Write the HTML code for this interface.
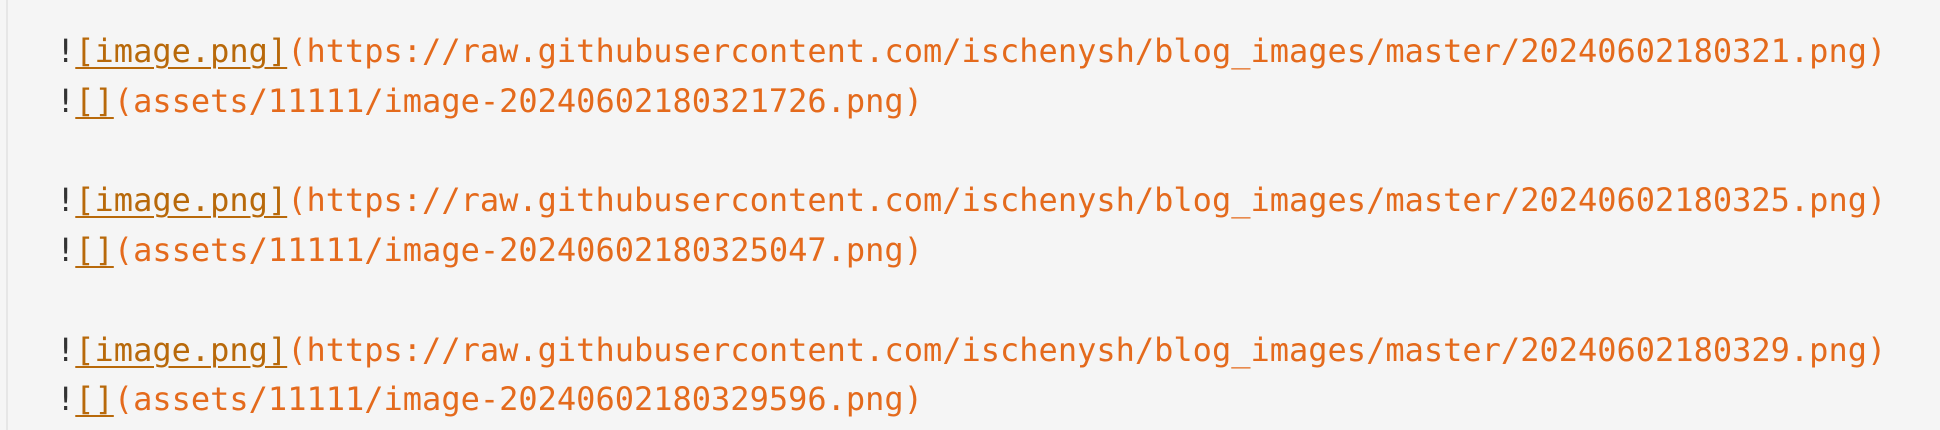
<!DOCTYPE html>
<html><head><meta charset="utf-8"><style>
html,body{margin:0;padding:0;width:1940px;height:430px;overflow:hidden;background:#f5f5f5;}
.bar{position:absolute;left:6px;top:0;width:2px;height:430px;background:#e6e6e6;}
pre{position:absolute;left:56px;top:27px;margin:0;font-family:"DejaVu Sans Mono","Liberation Mono",monospace;font-size:32px;line-height:49.75px;color:#e46a1c;}
.b{color:#333;}
.l{color:#b8690a;text-decoration:underline;text-decoration-thickness:2px;text-underline-offset:5px;}
</style></head><body><div class="bar"></div>
<pre><span class="b">!</span><span class="l">[image.png]</span>(https://raw.githubusercontent.com/ischenysh/blog_images/master/20240602180321.png)
<span class="b">!</span><span class="l">[]</span>(assets/11111/image-20240602180321726.png)

<span class="b">!</span><span class="l">[image.png]</span>(https://raw.githubusercontent.com/ischenysh/blog_images/master/20240602180325.png)
<span class="b">!</span><span class="l">[]</span>(assets/11111/image-20240602180325047.png)

<span class="b">!</span><span class="l">[image.png]</span>(https://raw.githubusercontent.com/ischenysh/blog_images/master/20240602180329.png)
<span class="b">!</span><span class="l">[]</span>(assets/11111/image-20240602180329596.png)</pre>
</body></html>
